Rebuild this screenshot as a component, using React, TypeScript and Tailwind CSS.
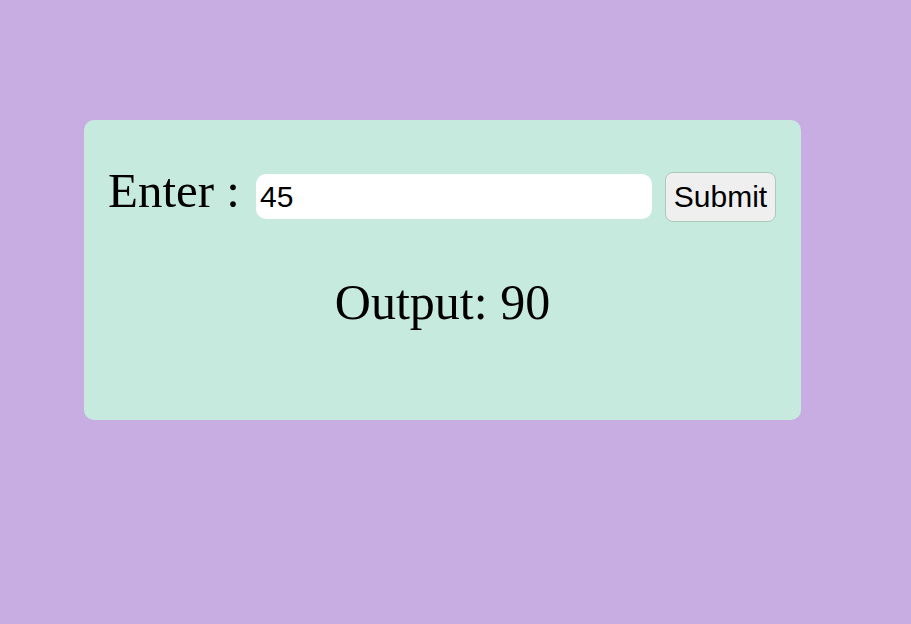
import React, { useState } from 'react';

export default function App() {
  const [value, setValue] = useState('45');
  const [output, setOutput] = useState(90);

  const handleSubmit = (e: React.FormEvent) => {
    e.preventDefault();
    const n = parseFloat(value);
    if (!isNaN(n)) setOutput(n * 2);
  };

  return (
    <div className="min-h-screen w-full bg-[#c8ade3] pt-[120px] pl-[84px]">
      <div className="w-[717px] h-[300px] rounded-[10px] bg-[#c7eadf] pt-[34px]">
        <form onSubmit={handleSubmit} className="flex items-baseline px-6">
          <label className="font-['Liberation_Serif',serif] text-[49px] text-black mr-[16px]">
            Enter :
          </label>
          <input
            type="text"
            value={value}
            onChange={(e) => setValue(e.target.value)}
            className="w-[396px] h-[45px] rounded-[10px] bg-white px-[4px] font-['Liberation_Sans',Arial,sans-serif] text-[30px] text-black outline-none"
          />
          <button
            type="submit"
            className="ml-[13px] w-[111px] rounded-[8px] border border-[#aacbb8] bg-[#efefef] px-[6px] py-[7px] font-['Liberation_Sans',Arial,sans-serif] text-[30px] leading-[34px] text-black"
          >
            Submit
          </button>
        </form>
        <div className="mt-[37px] text-center font-['Liberation_Serif',serif] text-[50px] text-black">
          Output: {output}
        </div>
      </div>
    </div>
  );
}
